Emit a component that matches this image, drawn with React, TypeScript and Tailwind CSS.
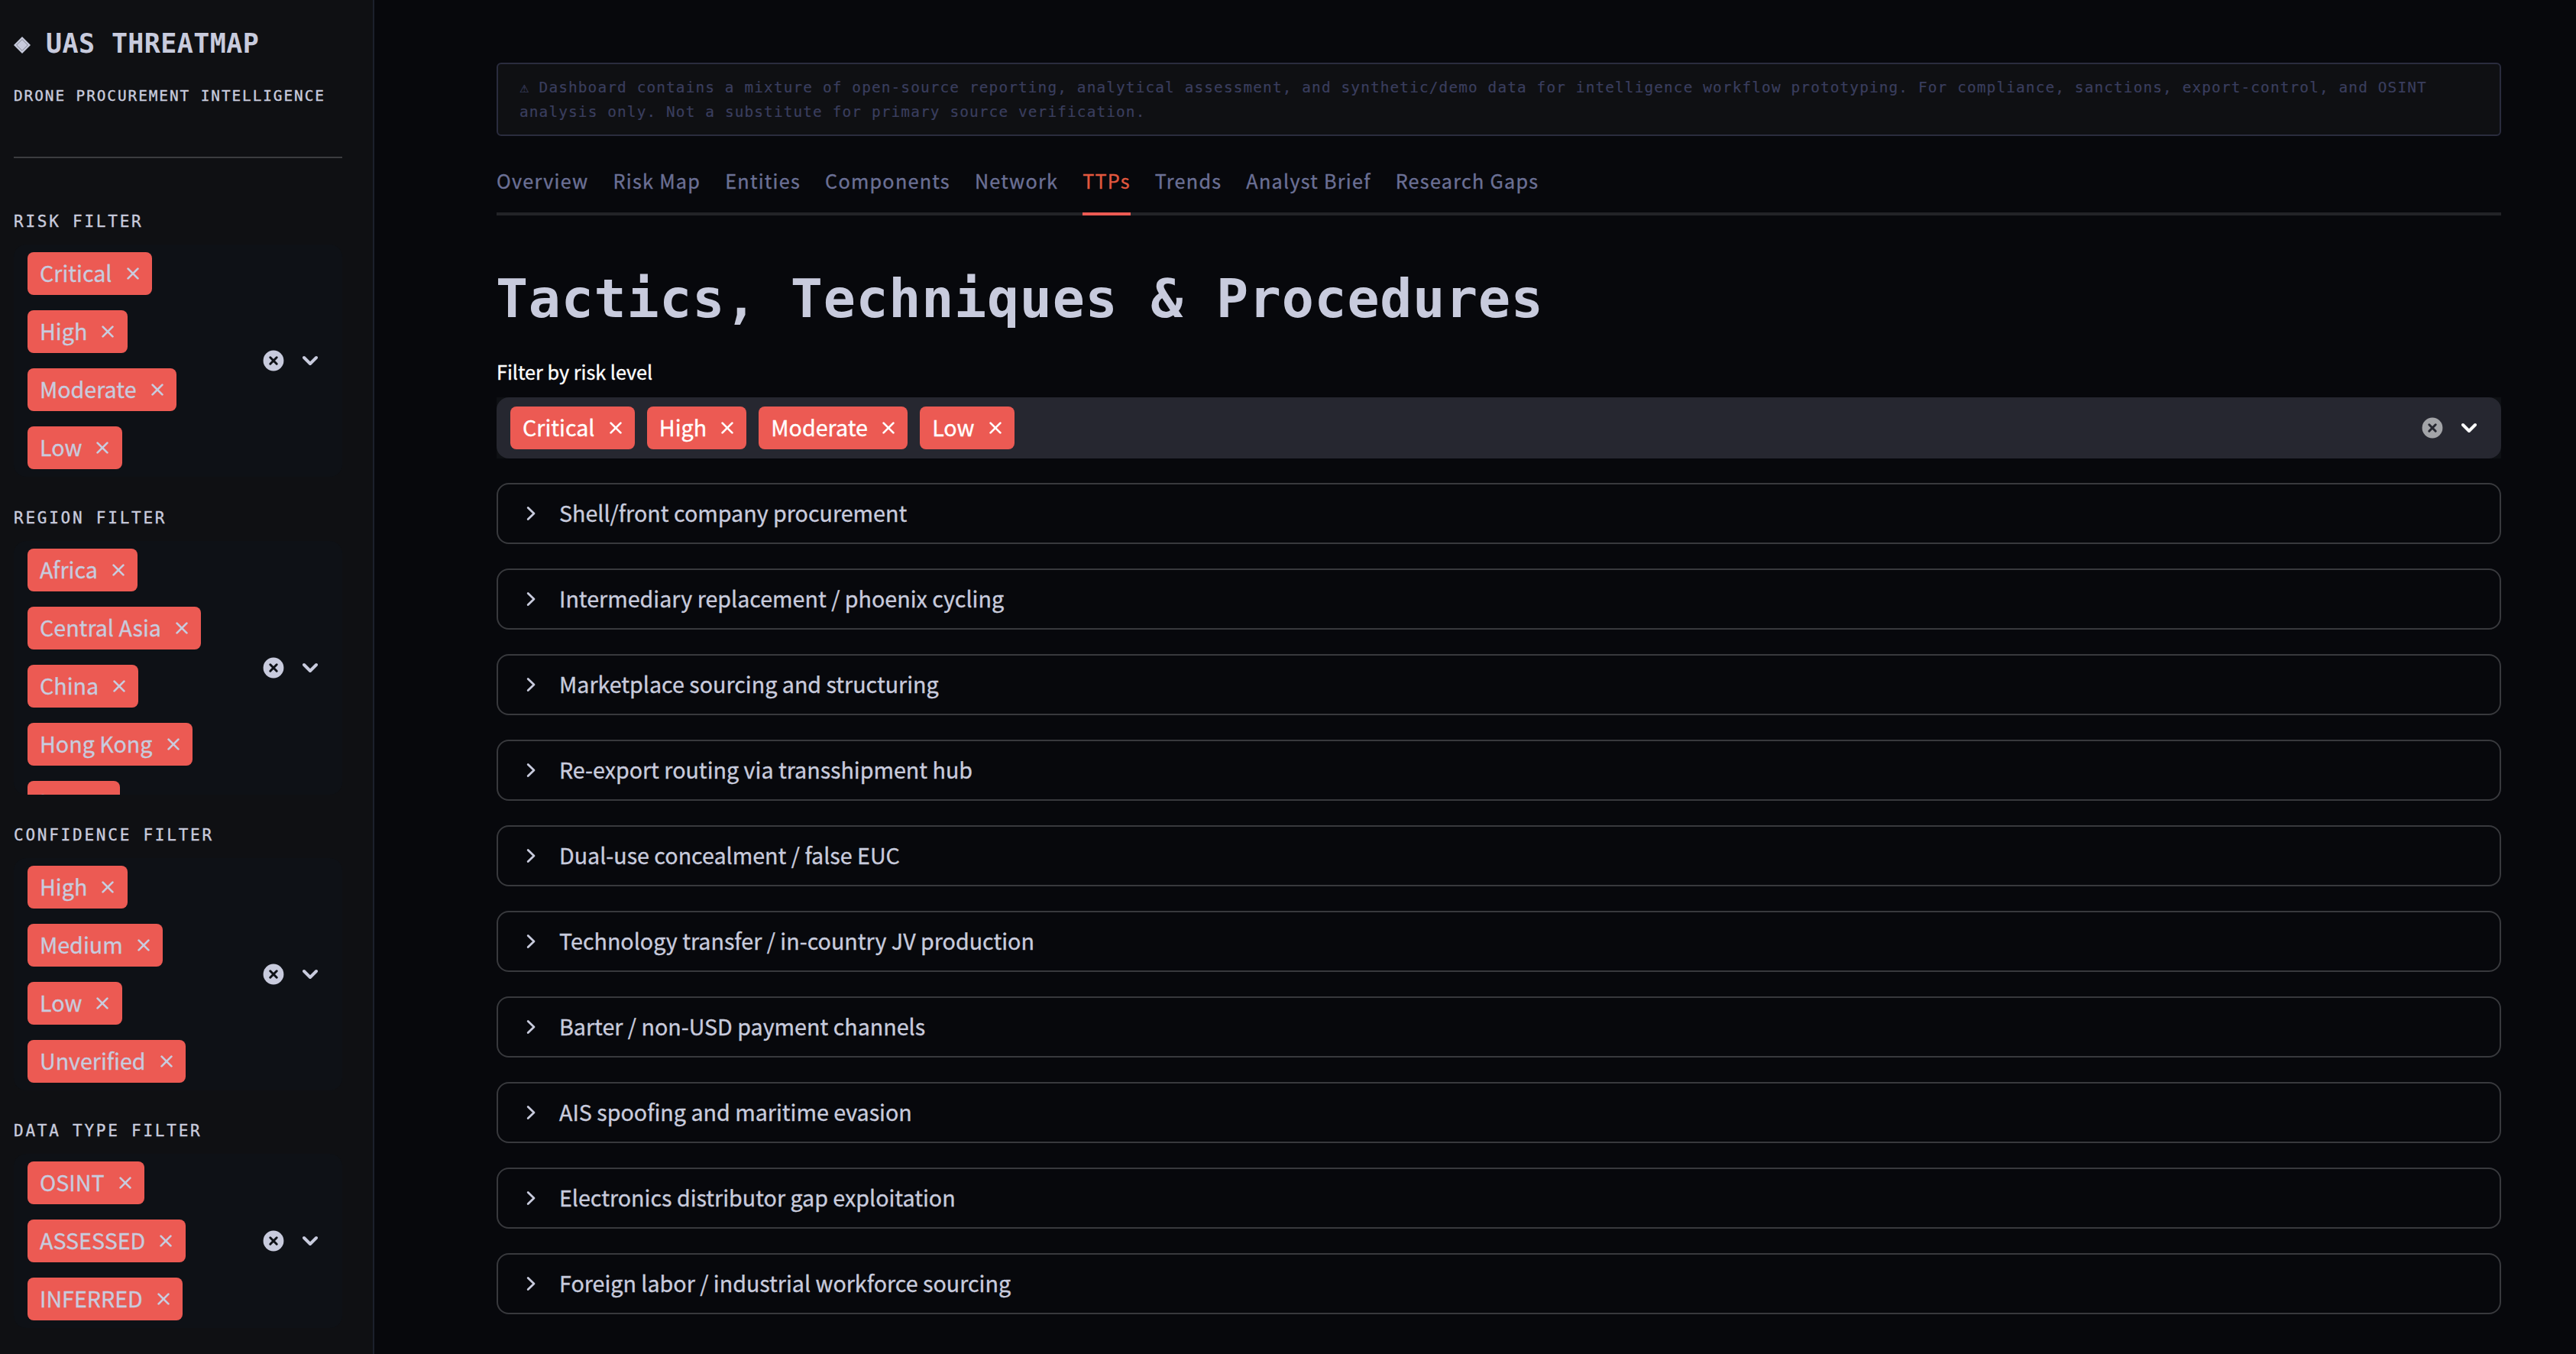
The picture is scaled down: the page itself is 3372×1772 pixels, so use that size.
import React, { useState } from 'react';

const SANS = "font-['Noto_Sans_CJK_SC','Noto_Sans',sans-serif]";
const MONO = "font-['DejaVu_Sans_Mono','Liberation_Mono',monospace]";

const TABS = ['Overview', 'Risk Map', 'Entities', 'Components', 'Network', 'TTPs', 'Trends', 'Analyst Brief', 'Research Gaps'];

const RISK_LEVELS = ['Critical', 'High', 'Moderate', 'Low'];

const FILTERS = [
  { label: 'Risk Filter', values: RISK_LEVELS, spacing: 'mt-[69px]', height: 'h-[304px]' },
  { label: 'Region Filter', values: ['Africa', 'Central Asia', 'China', 'Hong Kong', 'Iran'], spacing: 'mt-[39.5px]', height: 'h-[332px]' },
  { label: 'Confidence Filter', values: ['High', 'Medium', 'Low', 'Unverified'], spacing: 'mt-[39.5px]', height: 'h-[304px]' },
  { label: 'Data Type Filter', values: ['OSINT', 'ASSESSED', 'INFERRED'], spacing: 'mt-[39px]', height: 'h-[228px]' },
];

const TTPS = [
  'Shell/front company procurement',
  'Intermediary replacement / phoenix cycling',
  'Marketplace sourcing and structuring',
  'Re-export routing via transshipment hub',
  'Dual-use concealment / false EUC',
  'Technology transfer / in-country JV production',
  'Barter / non-USD payment channels',
  'AIS spoofing and maritime evasion',
  'Electronics distributor gap exploitation',
  'Foreign labor / industrial workforce sourcing',
];

function Tag({ value }: { value: string }) {
  return (
    <span className="flex h-14 shrink-0 items-center rounded-lg bg-[#ec5a53] pr-[17.3px] pl-4">
      <span className="pb-0.5 text-[28.65px] leading-[54px] whitespace-nowrap">{value}</span>
      <svg className="ml-[19px] h-4 w-4" viewBox="0 0 16 16" fill="none" stroke="currentColor" strokeWidth="2.7" strokeLinecap="round">
        <path d="M1.6 1.6 14.4 14.4M14.4 1.6 1.6 14.4" />
      </svg>
    </span>
  );
}

function SelectControls({ clearClass, crossColor }: { clearClass: string; crossColor: string }) {
  return (
    <div className="flex shrink-0 items-center gap-6 pr-8">
      <svg className={`h-7 w-7 ${clearClass}`} viewBox="0 0 28 28">
        <circle cx="14" cy="14" r="13.4" fill="currentColor" />
        <path d="M9.8 9.8 18.2 18.2M18.2 9.8 9.8 18.2" stroke={crossColor} strokeWidth="3" strokeLinecap="round" />
      </svg>
      <svg className="h-5 w-5" viewBox="0 0 20 20" fill="none" stroke="currentColor" strokeWidth="4" strokeLinecap="round" strokeLinejoin="round">
        <path d="M2 6 10 14 18 6" />
      </svg>
    </div>
  );
}

function SidebarFilter({ label, values, spacing, height }: (typeof FILTERS)[number]) {
  return (
    <section className={spacing}>
      <h3 className={`${MONO} mb-4 text-[21px] leading-7 tracking-[2.76px] uppercase`}>{label}</h3>
      <div className={`${height} flex items-center overflow-hidden rounded-2xl bg-[#0e1116]`}>
        <div className="flex h-full flex-1 flex-col items-start gap-5 overflow-hidden pt-2.5 pl-[18px]">
          {values.map((v) => (
            <Tag key={v} value={v} />
          ))}
        </div>
        <SelectControls clearClass="text-[#c8cbdd]" crossColor="#0e1116" />
      </div>
    </section>
  );
}

export default function App() {
  const [activeTab, setActiveTab] = useState<string>('TTPs');

  return (
    <div className={`${SANS} flex h-[1772px] w-[3372px] overflow-hidden bg-[#07080c] text-[#c8cbdd] [-webkit-text-stroke:0.35px]`}>
      {/* Sidebar */}
      <aside className="h-full w-[490px] shrink-0 border-r-2 border-[#1c202c] bg-[#0f1013] pr-10 pl-[18px]">
        <div className={`${MONO} flex items-center pt-[33px]`}>
          <svg className="mt-1 mr-5 h-[22px] w-[22px]" viewBox="0 0 22 22">
            <path d="M11 0 22 11 11 22 0 11Z" fill="currentColor" />
            <path d="M11 3.6 18.4 11 11 18.4 3.6 11Z" fill="none" stroke="#6e7079" strokeWidth="0.8" />
          </svg>
          <h1 className="text-[35px] leading-[48px] font-bold tracking-[0.4px] whitespace-nowrap [-webkit-text-stroke:0]">UAS THREATMAP</h1>
        </div>
        <p className={`${MONO} mt-[31px] text-[19.4px] leading-7 tracking-[1.92px] whitespace-nowrap uppercase`}>Drone Procurement Intelligence</p>
        <div className="mt-[65px] h-0.5 bg-[#3b3c3f]" />
        {FILTERS.map((f) => (
          <SidebarFilter key={f.label} {...f} />
        ))}
      </aside>

      {/* Main content */}
      <main className="flex-1 pt-[82px] pr-[98px] pl-40">
        <div className={`${MONO} h-24 rounded-md border-2 border-[#2a2c3e] bg-[#0f1013] px-7 pt-[15px] text-[19.4px] leading-8 tracking-[1.13px] text-[#3a3e5e] [-webkit-text-stroke:0.2px]`}>
          <span className="mr-[13.8px] inline-block w-[11.8px] font-['DejaVu_Sans'] text-[14px] leading-4 tracking-normal">⚠</span>
          Dashboard contains a mixture of open-source reporting, analytical assessment, and synthetic/demo data for intelligence workflow prototyping. For compliance, sanctions, export-control, and OSINT analysis only. Not a substitute for primary source verification.
        </div>

        <nav className="mt-[20px] flex h-[84px] gap-8 border-b-4 border-[#222327]">
          {TABS.map((tab) => (
            <button
              key={tab}
              onClick={() => setActiveTab(tab)}
              className={`-mb-1 border-b-4 pb-[3px] text-[25.2px] leading-[77px] tracking-[1.26px] whitespace-nowrap ${
                tab === activeTab ? 'border-[#ec5a53] text-[#e2583f]' : 'border-transparent text-[#6b7095]'
              }`}
            >
              {tab}
            </button>
          ))}
        </nav>

        <h2 className={`${MONO} mt-[61px] -ml-px text-[70px] leading-[96px] font-bold tracking-[0.72px] whitespace-nowrap [-webkit-text-stroke:0]`}>
          Tactics, Techniques &amp; Procedures
        </h2>

        <label className="mt-[27px] block text-[25.2px] leading-10 text-white">Filter by risk level</label>
        <div className="mt-3.5 bg-[#0e1014]">
          <div className="flex h-20 items-center justify-between rounded-2xl bg-[#262730] pl-[18px] text-white">
            <div className="flex gap-4">
              {RISK_LEVELS.map((v) => (
                <Tag key={v} value={v} />
              ))}
            </div>
            <SelectControls clearClass="text-[#a3a4a8]" crossColor="#262730" />
          </div>
        </div>

        <div className="mt-8 space-y-8">
          {TTPS.map((t) => (
            <div key={t} className="flex h-20 items-center rounded-2xl border-2 border-[#38393d] pl-[37px]">
              <svg className="mr-[30px] h-5 w-[13px]" viewBox="0 0 13 20" fill="none" stroke="currentColor" strokeWidth="2.8" strokeLinecap="round" strokeLinejoin="round">
                <path d="M2.2 2.4 10 10 2.2 17.6" />
              </svg>
              <span className="pb-0.5 text-[28.65px] leading-[54px]">{t}</span>
            </div>
          ))}
        </div>
      </main>
    </div>
  );
}
